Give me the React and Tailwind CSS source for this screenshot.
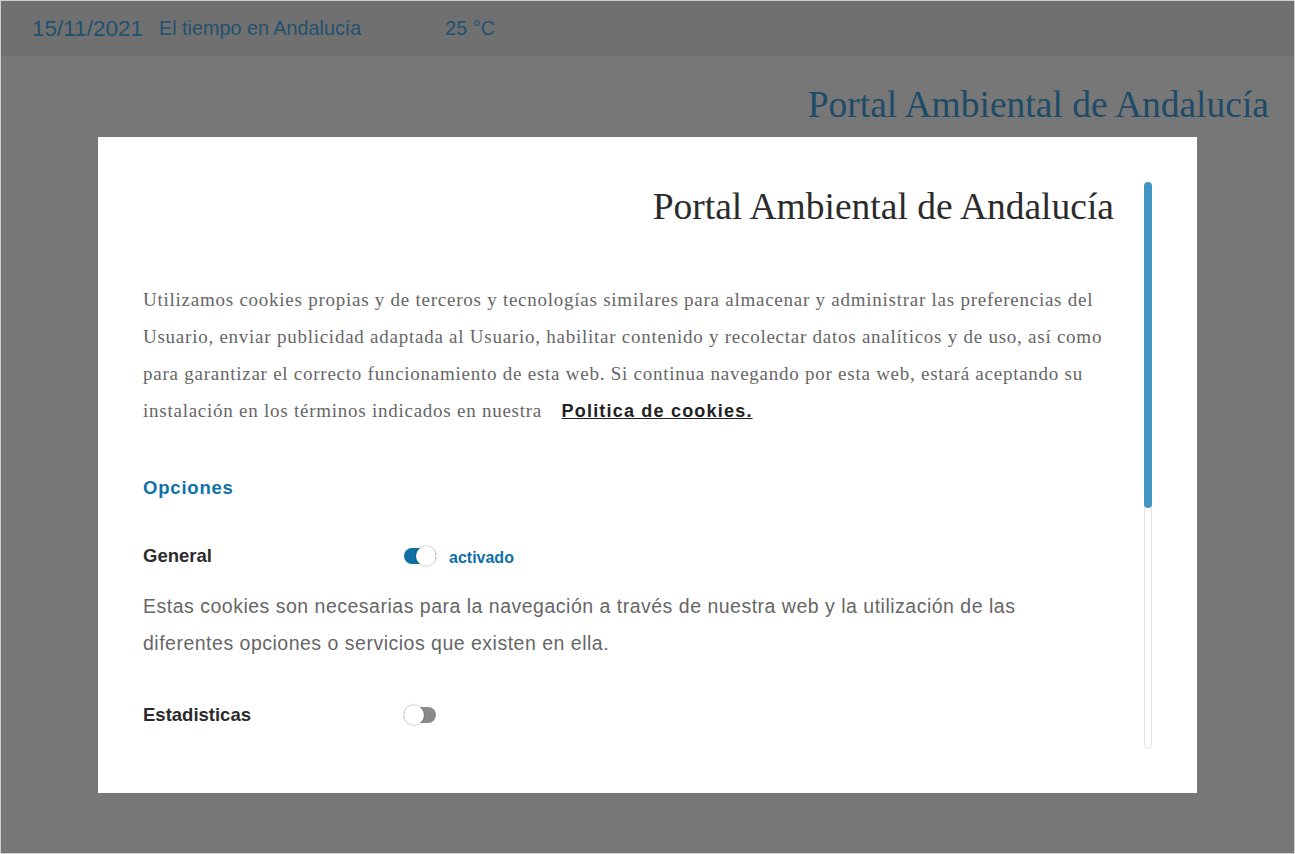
const serif = { fontFamily: '"Liberation Serif", "Times New Roman", serif' };

const Toggle = ({ on }) => (
  <span
    className={`relative inline-flex h-[16px] w-[32px] items-center rounded-full ${
      on ? "bg-[#0f6fa4] justify-end" : "bg-[#8a8a8a] justify-start"
    }`}
  >
    <span className="h-[20px] w-[20px] rounded-full bg-white shadow-[0_0_2px_rgba(0,0,0,0.45)]" />
  </span>
);

export default function App() {
  return (
    <div
      className="h-[854px] w-[1295px] overflow-hidden border border-[#cfcfcf] bg-[#777777] flex flex-col"
      style={{ fontFamily: '"Liberation Sans", Arial, sans-serif' }}
    >
      {/* page header behind the overlay */}
      <header className="h-[55px] bg-[#707070] flex items-center pl-[31px] text-[#22506f]">
        <span className="text-[22.5px]">15/11/2021</span>
        <span className="ml-[16px] text-[19.8px]">El tiempo en Andalucía</span>
        <span className="ml-[84px] text-[19.8px]">25 °C</span>
      </header>

      <div className="flex justify-end pr-[25px] pt-[30px] h-[81px]">
        <h1 className="text-[37.5px] leading-none text-[#1e4b68]" style={serif}>
          Portal Ambiental de Andalucía
        </h1>
      </div>

      {/* cookies modal */}
      <div className="ml-[97px] w-[1099px] h-[656px] bg-white pl-[45px] pr-[45px] pt-[45px]">
        <div className="flex h-[567px] gap-[30px]">
          <div className="flex-1 overflow-hidden">
            <h2
              className="mt-[4px] text-right text-[37.5px] leading-[41px] text-[#2b2b2b]"
              style={serif}
            >
              Portal Ambiental de Andalucía
            </h2>

            <p
              className="mt-[54px] text-[19px] leading-[37px] tracking-[0.75px] text-[#666666]"
              style={serif}
            >
              Utilizamos cookies propias y de terceros y tecnologías similares para almacenar y administrar las preferencias del Usuario, enviar publicidad adaptada al Usuario, habilitar contenido y recolectar datos analíticos y de uso, así como para garantizar el correcto funcionamiento de esta web. Si continua navegando por esta web, estará aceptando su instalación en los términos indicados en nuestra{" "}
              <a
                href="#"
                className="ml-[14px] font-bold underline text-[18px] tracking-[1.2px] text-[#222222]"
                style={{ fontFamily: '"Liberation Sans", Arial, sans-serif' }}
              >
                Politica de cookies.
              </a>
            </p>

            <h3 className="mt-[46px] text-[18.5px] leading-[24px] font-bold tracking-[0.8px] text-[#0f72a8]">
              Opciones
            </h3>

            <div className="mt-[44px] flex items-center h-[24px]">
              <span className="w-[261px] text-[18.5px] font-bold text-[#2b2b2b]">General</span>
              <Toggle on />
              <span className="ml-[13px] text-[16px] font-bold text-[#0f6fa4] mt-[3px]">activado</span>
            </div>

            <p className="mt-[20px] mr-[14px] text-[19.5px] leading-[37px] tracking-[0.5px] text-[#666666]">
              Estas cookies son necesarias para la navegación a través de nuestra web y la utilización de las diferentes opciones o servicios que existen en ella.
            </p>

            <div className="mt-[41px] flex items-center h-[24px]">
              <span className="w-[261px] text-[18.5px] font-bold text-[#2b2b2b]">Estadisticas</span>
              <Toggle on={false} />
            </div>
          </div>

          {/* scrollbar */}
          <div className="w-[8px] rounded-full border border-[#e4e4e4] flex flex-col">
            <div className="h-[326px] -mx-px -mt-px rounded-full bg-[#4396c4]" />
          </div>
        </div>
      </div>
    </div>
  );
}
